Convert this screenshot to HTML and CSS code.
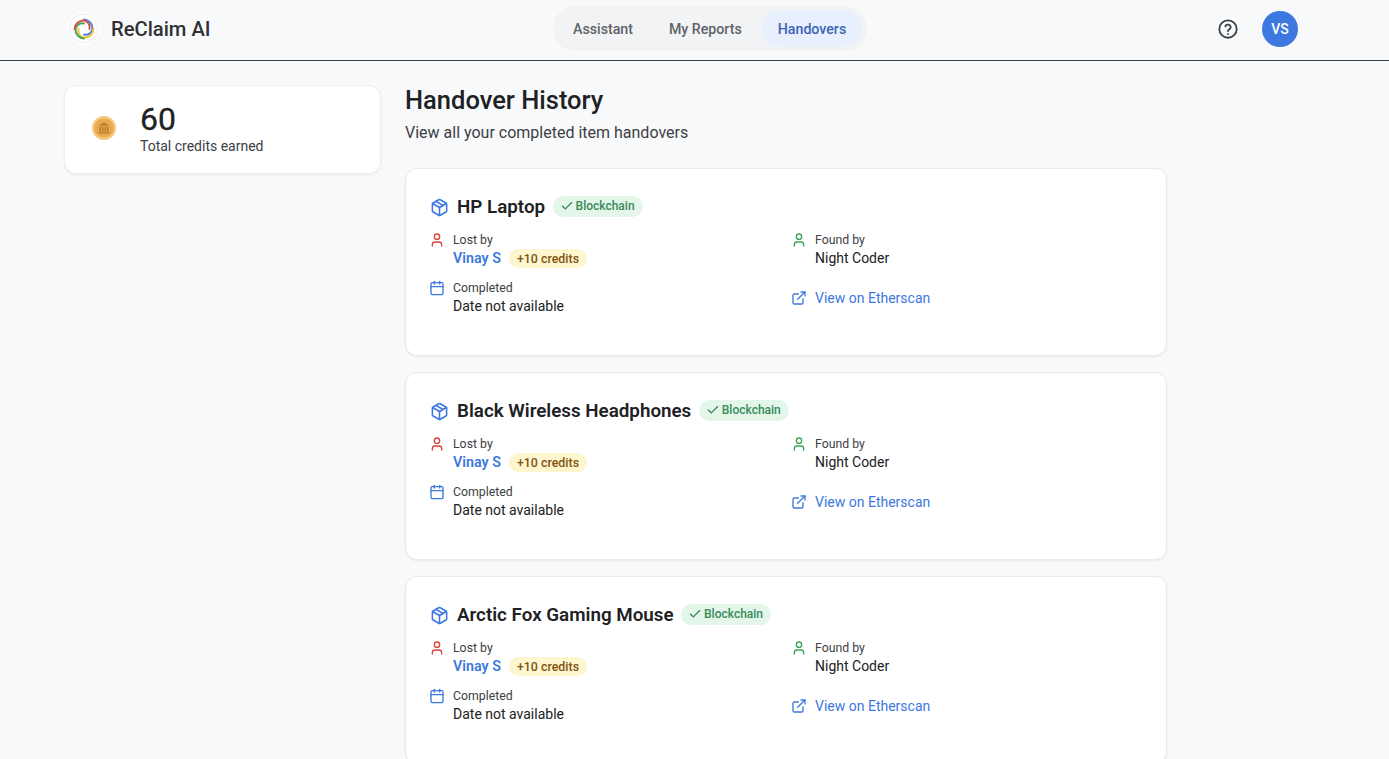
FILE: index.html
```html
<!DOCTYPE html>
<html lang="en">
<head>
<meta charset="utf-8">
<title>ReClaim AI</title>
<link rel="stylesheet" href="styles.css">
</head>
<body>
<svg class="defs" width="0" height="0">
  <defs>
    <symbol id="i-box" viewBox="0 0 24 24"><path d="M21 8a2 2 0 0 0-1-1.730l-7-4a2 2 0 0 0-2 0l-7 4A2 2 0 0 0 3 8v8a2 2 0 0 0 1 1.730l7 4a2 2 0 0 0 2 0l7-4A2 2 0 0 0 21 16Z"/><path d="M12 22V12"/><path d="m3.300 7 8.700 5 8.700-5"/><path d="m7.500 4.270 9 5.150"/></symbol>
    <symbol id="i-user" viewBox="0 0 24 24"><path d="M19 21v-2a4 4 0 0 0-4-4H9a4 4 0 0 0-4 4v2"/><circle cx="12" cy="7" r="4"/></symbol>
    <symbol id="i-cal" viewBox="0 0 24 24"><path d="M8 2v4"/><path d="M16 2v4"/><rect x="3" y="4" width="18" height="18" rx="2"/><path d="M3 10h18"/></symbol>
    <symbol id="i-ext" viewBox="0 0 24 24"><path d="M18 13v6a2 2 0 0 1-2 2H5a2 2 0 0 1-2-2V8a2 2 0 0 1 2-2h6"/><path d="M15 3h6v6"/><path d="M10 14 21 3"/></symbol>
    <symbol id="i-check" viewBox="0 0 24 24"><path d="M20 6 9 17l-5-5"/></symbol>
    <path id="arm" d="M2.500 12A9 9 0 0 1 12 3.500 7 7 0 0 1 17.500 12"/>
  </defs>
</svg>
<header class="topbar">
  <div class="brand">
    <span class="logo">
      <svg viewBox="0 0 24 24" width="24" height="24" fill="none" stroke-width="2" stroke-linecap="round">
        <use href="#arm" stroke="#4a86e0" transform="rotate(90 12 12)"/>
        <use href="#arm" stroke="#f0c23c" transform="rotate(180 12 12)"/>
        <use href="#arm" stroke="#45a85c" transform="rotate(270 12 12)"/>
        <use href="#arm" stroke="#d9534a"/>
      </svg>
    </span>
    <span class="brand-name">ReClaim AI</span>
  </div>
  <nav class="tabs">
    <a class="tab">Assistant</a>
    <a class="tab">My Reports</a>
    <a class="tab tab-active">Handovers</a>
  </nav>
  <div class="actions">
    <svg class="help" viewBox="0 0 24 24" width="22" height="22"><circle cx="12" cy="12" r="9.500"/><path d="M9.100 9.200a3 3 0 0 1 5.800 1c0 2-3 2.600-3 4"/><path d="M12 17.400h.01"/></svg>
    <span class="avatar">VS</span>
  </div>
</header>
<main class="layout">
  <aside class="side">
    <section class="credits">
      <svg class="coin" viewBox="0 0 24 24" width="24" height="24">
        <circle cx="12" cy="12" r="12" fill="#f5c878"/>
        <circle cx="12" cy="12" r="9.600" fill="#e9a94f"/>
        <path d="M6.500 9.600 12 6.500l5.500 3.100Z M7.500 10.600h1.400v5h-1.400Z M10 10.600h1.400v5H10Z M12.600 10.600H14v5h-1.400Z M15.100 10.600h1.400v5h-1.400Z M6.500 16.200h11v1.300h-11Z" fill="#b9772a"/>
      </svg>
      <div class="credits-text">
        <div class="credits-num">60</div>
        <div class="credits-label">Total credits earned</div>
      </div>
    </section>
  </aside>
  <section class="content">
    <h1 class="title">Handover History</h1>
    <p class="subtitle">View all your completed item handovers</p>
    <div class="list">
      <article class="card">
        <div class="card-head">
          <svg class="ic-head blue"><use href="#i-box"/></svg>
          <h2 class="item-name">HP Laptop</h2>
          <span class="badge"><svg class="ic-check"><use href="#i-check"/></svg>Blockchain</span>
        </div>
        <div class="grid">
          <div class="cell"><svg class="ic red"><use href="#i-user"/></svg><div><div class="label">Lost by</div><div class="value value-row"><span class="person">Vinay S</span><span class="pill">+10 credits</span></div></div></div>
          <div class="cell"><svg class="ic green"><use href="#i-user"/></svg><div><div class="label">Found by</div><div class="value">Night Coder</div></div></div>
          <div class="cell"><svg class="ic blue"><use href="#i-cal"/></svg><div><div class="label">Completed</div><div class="value">Date not available</div></div></div>
          <a class="cell link"><svg class="ic blue"><use href="#i-ext"/></svg><span>View on Etherscan</span></a>
        </div>
      </article>
      <article class="card">
        <div class="card-head">
          <svg class="ic-head blue"><use href="#i-box"/></svg>
          <h2 class="item-name">Black Wireless Headphones</h2>
          <span class="badge"><svg class="ic-check"><use href="#i-check"/></svg>Blockchain</span>
        </div>
        <div class="grid">
          <div class="cell"><svg class="ic red"><use href="#i-user"/></svg><div><div class="label">Lost by</div><div class="value value-row"><span class="person">Vinay S</span><span class="pill">+10 credits</span></div></div></div>
          <div class="cell"><svg class="ic green"><use href="#i-user"/></svg><div><div class="label">Found by</div><div class="value">Night Coder</div></div></div>
          <div class="cell"><svg class="ic blue"><use href="#i-cal"/></svg><div><div class="label">Completed</div><div class="value">Date not available</div></div></div>
          <a class="cell link"><svg class="ic blue"><use href="#i-ext"/></svg><span>View on Etherscan</span></a>
        </div>
      </article>
      <article class="card">
        <div class="card-head">
          <svg class="ic-head blue"><use href="#i-box"/></svg>
          <h2 class="item-name">Arctic Fox Gaming Mouse</h2>
          <span class="badge"><svg class="ic-check"><use href="#i-check"/></svg>Blockchain</span>
        </div>
        <div class="grid">
          <div class="cell"><svg class="ic red"><use href="#i-user"/></svg><div><div class="label">Lost by</div><div class="value value-row"><span class="person">Vinay S</span><span class="pill">+10 credits</span></div></div></div>
          <div class="cell"><svg class="ic green"><use href="#i-user"/></svg><div><div class="label">Found by</div><div class="value">Night Coder</div></div></div>
          <div class="cell"><svg class="ic blue"><use href="#i-cal"/></svg><div><div class="label">Completed</div><div class="value">Date not available</div></div></div>
          <a class="cell link"><svg class="ic blue"><use href="#i-ext"/></svg><span>View on Etherscan</span></a>
        </div>
      </article>
    </div>
  </section>
</main>
</body>
</html>
```
FILE: styles.css
```css
* { box-sizing: border-box; }
html, body { height: 100%; }
body {
  margin: 0;
  height: 759px;
  overflow: hidden;
  background: #f8f9fb;
  color: #202124;
  font-family: Roboto, "Liberation Sans", sans-serif;
}
.defs { position: absolute; }
.topbar {
  height: 61px;
  border-bottom: 1px solid #3c4043;
  display: grid;
  grid-template-columns: 487px 314px 1fr;
  padding-left: 66px;
  padding-right: 91px;
  align-items: center;
}
.brand { display: flex; align-items: center; gap: 10px; height: 35px; margin-top: -3px; }
.logo {
  width: 35px; height: 35px; border-radius: 50%;
  background: #fff;
  box-shadow: inset 0 0 0 3px #fdfdfd, inset 0 0 0 4px #efefef;
  display: flex; align-items: center; justify-content: center;
}
.brand-name { font-size: 20.200px; font-weight: 500; color: #303134; }
.tabs {
  display: flex; align-items: center; gap: 4px;
  height: 45px; padding: 4px;
  background: #f1f3f4;
  border-radius: 23px;
  margin-top: -3px;
}
.tab {
  height: 37px; padding: 0 16px;
  display: flex; align-items: center;
  flex: none;
  white-space: nowrap;
  border-radius: 19px;
  font-size: 14.200px; font-weight: 500;
  color: #5f6368;
}
.tab-active { background: #e8f0fe; color: #3c64b4; }
.actions { display: flex; align-items: center; justify-content: flex-end; gap: 23px; margin-top: -3px; }
.help { fill: none; stroke: #3c4043; stroke-width: 2; stroke-linecap: round; stroke-linejoin: round; }
.avatar {
  width: 36px; height: 36px; border-radius: 50%;
  background: #3c78e0; color: #fff;
  display: flex; align-items: center; justify-content: center;
  font-size: 14px; font-weight: 500;
}
.layout {
  display: flex; align-items: flex-start; gap: 24px;
  padding: 24px 0 0 64px;
}
.side { width: 317px; flex: none; }
.credits {
  height: 89px;
  background: #fff;
  border: 1px solid #eceef1;
  border-radius: 12px;
  box-shadow: 0 1px 2px rgba(60,64,67,.08);
  display: flex; align-items: center;
  padding: 0 0 4px 27px;
  gap: 24px;
}
.coin { flex: none; }
.credits-num { font-size: 32px; font-weight: 400; line-height: 36px; color: #202124; -webkit-text-stroke: .3px #202124; }
.credits-label { font-size: 14px; line-height: 18px; color: #3c4043; }
.content { width: 762px; flex: none; }
.title { margin: 0; font-size: 25.500px; line-height: 30px; font-weight: 500; color: #202124; }
.subtitle { margin: 7px 0 0; font-size: 16px; line-height: 22px; color: #3c4043; }
.list { display: flex; flex-direction: column; gap: 16px; margin-top: 24px; }
.card {
  height: 188px;
  background: #fff;
  border: 1px solid #e8eaed;
  border-radius: 12px;
  box-shadow: 0 1px 2px rgba(60,64,67,.08);
  padding: 24px 24px 0;
  flex: none;
}
.card-head { display: flex; align-items: center; height: 28px; }
.ic { width: 16px; height: 16px; fill: none; stroke-width: 2; stroke-linecap: round; stroke-linejoin: round; flex: none; margin: 1px 0 0 -1px; }
.ic-head { width: 19px; height: 19px; margin: 0 8px 0 0; fill: none; stroke-width: 2; stroke-linecap: round; stroke-linejoin: round; flex: none; }
.blue { stroke: #3c78e0; }
.red { stroke: #d9453a; }
.green { stroke: #3aa655; }
.item-name { margin: 0 7.500px 0 0; font-size: 18.800px; line-height: 24px; font-weight: 600; color: #202124; }
.badge {
  display: inline-flex; align-items: center; gap: 2px;
  height: 21px; padding: 0 8px 0 7px;
  margin-top: -2px;
  border-radius: 11px;
  background: #e3f6e9; color: #3a8a5a;
  font-size: 12px; font-weight: 500;
}
.ic-check { width: 14px; height: 14px; fill: none; stroke: #2f7d4a; stroke-width: 2; stroke-linecap: round; stroke-linejoin: round; }
.grid {
  display: grid; grid-template-columns: 350px 350px; column-gap: 12px; row-gap: 11px;
  margin-top: 10px;
}
.cell { display: flex; gap: 8px; align-items: flex-start; height: 37px; }
.label { font-size: 12.300px; line-height: 18px; color: #3c4043; }
.value { font-size: 14px; line-height: 19px; color: #202124; }
.value-row { display: flex; align-items: center; gap: 8px; }
.person { color: #3c78e0; font-weight: 600; font-size: 14.300px; }
.pill {
  height: 19px; padding: 0 8px; border-radius: 10px;
  background: #fef6cf; color: #7f5312;
  font-size: 12.400px; font-weight: 500; line-height: 19px;
}
.link { align-items: center; color: #3c78e0; font-size: 14px; }
```
